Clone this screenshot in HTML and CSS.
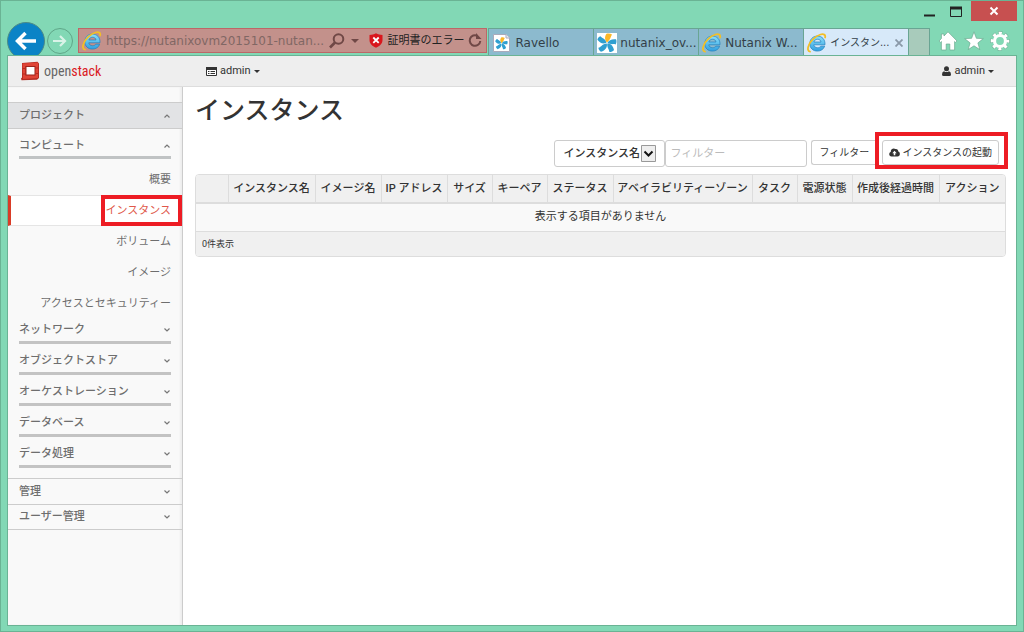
FILE: index.html
```html
<!DOCTYPE html>
<html lang="ja">
<head>
<meta charset="utf-8">
<title>インスタンス - OpenStack Dashboard</title>
<link rel="stylesheet" href="styles.css">
</head>
<body>
<svg class="defs" aria-hidden="true">
  <defs>
    <linearGradient id="ie-blue" x1="0" y1="0" x2="0" y2="1"><stop offset="0" stop-color="#8ce0fa"/><stop offset="1" stop-color="#2f9fe0"/></linearGradient>
    <symbol id="ie" viewBox="0 0 20 20">
      <path d="M18 11.800H6.800c.2 1.800 1.700 2.900 3.700 2.900 1.500 0 2.600-.5 3.300-1.500h3.900c-1.100 3.100-3.800 4.900-7.300 4.900-4.600 0-7.600-3.100-7.600-7.400s3-7.600 7.600-7.600c4.700 0 7.900 3.400 7.600 8.700zM6.900 9h7.100c-.3-1.800-1.600-2.700-3.500-2.700S7.300 7.300 6.900 9z" fill="url(#ie-blue)" stroke="#2380bd" stroke-width=".7"/>
      <path d="M3 18.600C.9 18.500.4 15.800 1.600 12.700 3.300 8 8.500 2.900 13.500 1.500c3.200-.9 5.300.2 4.600 3" fill="none" stroke="#f3bf26" stroke-width="1.800" stroke-linecap="round"/>
    </symbol>
    <symbol id="pinwheel" viewBox="0 0 20 20">
      <path d="M10 9.500C7.500 7 7.500 3.500 9.500.8c2-.6 4-.3 5.500.8C13.500 4 13.800 6.500 10 9.500z" fill="#fbb829"/>
      <path d="M10.500 9.800C12 7 14.500 5.800 19 6.200c.8 1.800.6 3.600-.4 5.200-2.600-.8-5 .6-8.100-1.600z" fill="#2f9fd0"/>
      <path d="M10.300 10.500c3.600-.2 5.700 2.500 6.700 6.500-1.300 1.500-2.800 2.100-4.600 2-.2-3-2.700-4.500-2.100-8.500z" fill="#2f9fd0"/>
      <path d="M9.800 10.500c.8 4-1.300 6.700-5.800 8.300-1.500-1-2.500-2.300-2.600-4C4.500 14 5 11 9.800 10.500z" fill="#2f9fd0"/>
      <path d="M9.500 9.800C6 11.500 3 10.200.4 6.800.8 5 1.800 3.800 3.400 3.200 5.500 5.500 8.500 5.500 9.500 9.800z" fill="#2f9fd0"/>
    </symbol>
    <symbol id="up" viewBox="0 0 8 6"><path d="M1.500 4.500 4 2l2.500 2.500" fill="none" stroke="#777" stroke-width="1.200"/></symbol>
    <symbol id="down" viewBox="0 0 8 6"><path d="M1.500 1.500 4 4l2.500-2.500" fill="none" stroke="#777" stroke-width="1.200"/></symbol>
    <symbol id="caret" viewBox="0 0 8 4"><path d="M0 0h8L4 4z" fill="currentColor"/></symbol>
  </defs>
</svg>

<div class="window">
  <div class="titlebar">
    <button class="win-btn" aria-label="最小化"><svg width="12" height="12"><path d="M0 9.500h11" stroke="#222" stroke-width="2"/></svg></button>
    <button class="win-btn" aria-label="最大化"><svg width="13" height="12"><path d="M.5 2v8.500h11V2" fill="none" stroke="#222"/><path d="M0 2h12" stroke="#222" stroke-width="3"/></svg></button>
    <button class="win-btn close" aria-label="閉じる"><svg width="10" height="10"><path d="m1.500 1.500 7 7m0-7-7 7" stroke="#fff" stroke-width="2"/></svg></button>
  </div>

  <div class="navbar">
    <button class="back" aria-label="戻る"><svg width="22" height="20" viewBox="0 0 22 20"><path d="M2.500 10H21M10.500 2l-8 8 8 8" fill="none" stroke="#fff" stroke-width="3.500"/></svg></button>
    <button class="forward" aria-label="進む"><svg width="14" height="12" viewBox="0 0 14 12"><path d="M0 6h12M7 1l5 5-5 5" fill="none" stroke="#d9f3e8" stroke-width="2.200"/></svg></button>
    <div class="address">
      <svg width="20" height="20"><use href="#ie"/></svg>
      <input class="url" type="text" aria-label="アドレス" value="https://nutanixovm2015101-nutan...">
      <button class="plain" aria-label="検索"><svg width="16" height="16"><circle cx="9.500" cy="6" r="4.800" fill="none" stroke="#704846" stroke-width="2"/><path d="m6 9.500-5 5" stroke="#704846" stroke-width="2.600"/></svg></button>
      <button class="plain drop" aria-label="履歴"><svg width="8" height="4"><use href="#caret"/></svg></button>
      <button class="cert"><svg width="14" height="15" viewBox="0 0 14 15"><path d="M7 .3C9 1.600 11 2 13.500 2v5c0 3.500-2.500 6-6.500 7.700C3 13 .5 10.500.5 7V2C3 2 5 1.600 7 .3z" fill="#d9161d"/><path d="m4.300 4.500 5.400 5.400m0-5.400L4.300 9.900" stroke="#fff" stroke-width="1.800"/></svg>証明書のエラー</button>
      <button class="plain" aria-label="更新"><svg width="14" height="15"><path d="M9.500 2.800A5.300 5.300 0 1 0 12.300 8" fill="none" stroke="#704846" stroke-width="2"/><path d="M8 0v6h5.500z" fill="#704846"/></svg></button>
    </div>
    <div class="tabs">
      <button class="tab"><svg width="20" height="20" viewBox="0 0 20 20"><path d="M1.500 1.500H14l3.500 3.500v13.500h-16z" fill="#fff" stroke="#aab"/><path d="M14 1.500V5h3.500" fill="#eee" stroke="#aab"/><use href="#pinwheel" x="3" y="4" width="13" height="13"/></svg><span>Ravello</span></button>
      <button class="tab"><svg width="20" height="20"><path d="M0 0h20v20H0z" fill="#fff"/><use href="#pinwheel" width="20" height="20"/></svg><span>nutanix_ov...</span></button>
      <button class="tab"><svg width="20" height="20"><use href="#ie"/></svg><span>Nutanix W...</span></button>
      <button class="tab current"><svg width="20" height="20"><use href="#ie"/></svg><span>インスタン...</span><svg class="tab-x" width="8" height="8"><path d="m.5.5 7 7m0-7-7 7" stroke="#8a99a8" stroke-width="1.800"/></svg></button>
      <button class="new-tab" aria-label="新しいタブ"></button>
    </div>
    <div class="tools">
      <button class="plain" aria-label="ホーム"><svg width="20" height="20" viewBox="0 0 20 20"><path d="M10 .8 19 10l-1.500 1.400-.9-.9V19h-4.800v-6H8.200v6H3.400v-8.500l-.9.900L1 10l2.400-2.500V3H6v2z" fill="#fff" stroke="#6ba98f" stroke-width=".7"/></svg></button>
      <button class="plain" aria-label="お気に入り"><svg width="20" height="20" viewBox="0 0 20 20"><path d="m10 .8 2.400 6.500 6.900.3-5.400 4.300 1.900 6.700-5.800-3.800-5.800 3.800 1.900-6.700L.7 7.600l6.900-.3z" fill="#fff" stroke="#6ba98f" stroke-width=".7"/></svg></button>
      <button class="plain" aria-label="ツール"><svg width="20" height="20" viewBox="0 0 20 20"><circle cx="10" cy="10" r="7.800" fill="none" stroke="#6ba98f" stroke-width="4" stroke-dasharray="3.700 2.426" stroke-dashoffset="1.800"/><circle cx="10" cy="10" r="7.800" fill="none" stroke="#fff" stroke-width="3" stroke-dasharray="3.100 3.026" stroke-dashoffset="1.500"/><circle cx="10" cy="10" r="5.500" fill="none" stroke="#fff" stroke-width="3.200"/></svg></button>
    </div>
  </div>

  <div class="page">
    <header class="topbar">
      <a class="brand" href="#">
        <svg width="20" height="20" viewBox="0 0 20 20"><path d="M2 2 17.500.8 19 2.500V17l-2 1.800L1.500 19.300 1 17.500l1-1z" fill="#b52c22"/><path d="M2.500 2.500 18 1.500V17L3 18z" fill="#e04436"/><path d="M5.300 5h10.200v9.500H5.300z" fill="#9c231b"/><path d="M6.500 6h8v7.500h-8z" fill="#fff"/><path d="M2.500 7.500h2.800M2.500 13h2.800M15.500 7H18M15.500 12.500H18" stroke="#b52c22"/></svg>
        <span class="logo-text">open<b>stack</b></span>
      </a>
      <button class="menu project"><svg width="11" height="9"><path d="M.5.500h10v8H.5z" fill="#fff" stroke="#333"/><path d="M2 4.500h1.500M4.500 4.500H9M2 6.500h1.500M4.500 6.500H9" stroke="#333"/><path d="M0 0h11v3H0z" fill="#333"/></svg>admin<svg width="6" height="3"><use href="#caret"/></svg></button>
      <button class="menu"><svg width="9" height="10" viewBox="0 0 9 10"><circle cx="4.500" cy="2.700" r="2.500" fill="#333"/><path d="M2 5.200Q4.500 7 7 5.200 9 5.600 9 8.500 9 10 7.500 10h-6Q0 10 0 8.500 0 5.600 2 5.200z" fill="#333"/></svg>admin<svg width="6" height="3"><use href="#caret"/></svg></button>
    </header>

    <div class="body">
      <nav class="sidebar">
        <button class="dash open">プロジェクト<svg width="8" height="6"><use href="#up"/></svg></button>
        <div class="groups">
          <button class="group"><span>コンピュート</span><svg width="8" height="6"><use href="#up"/></svg></button>
        </div>
        <ul class="panels">
          <li><a href="#">概要</a></li>
          <li class="active"><a href="#">インスタンス</a><i class="mark mark-nav"></i></li>
          <li><a href="#">ボリューム</a></li>
          <li><a href="#">イメージ</a></li>
          <li><a href="#">アクセスとセキュリティー</a></li>
        </ul>
        <div class="groups rest">
          <button class="group"><span>ネットワーク</span><svg width="8" height="6"><use href="#down"/></svg></button>
          <button class="group"><span>オブジェクトストア</span><svg width="8" height="6"><use href="#down"/></svg></button>
          <button class="group"><span>オーケストレーション</span><svg width="8" height="6"><use href="#down"/></svg></button>
          <button class="group"><span>データベース</span><svg width="8" height="6"><use href="#down"/></svg></button>
          <button class="group"><span>データ処理</span><svg width="8" height="6"><use href="#down"/></svg></button>
        </div>
        <button class="dash">管理<svg width="8" height="6"><use href="#down"/></svg></button>
        <button class="dash last">ユーザー管理<svg width="8" height="6"><use href="#down"/></svg></button>
      </nav>

      <main class="content">
        <h1>インスタンス</h1>
        <form class="actions">
          <div class="picker">
            <select class="field" aria-label="検索対象"><option>インスタンス名</option></select>
            <svg class="picker-arrow" width="15" height="17"><path d="M.5.500h14v16H.5z" fill="#eee" stroke="#999"/><path d="m3.500 6.500 4 4 4-4" fill="none" stroke="#111" stroke-width="2"/></svg>
          </div>
          <input class="filter" type="text" placeholder="フィルター" aria-label="フィルター">
          <button class="btn btn-filter" type="button">フィルター</button>
          <div class="launch">
            <button class="btn" type="button"><svg width="11" height="9" viewBox="0 0 11 9"><path d="M2.500 8.500C-.5 8.300-.3 4.500 1.800 4 1.500 1 4.500-.5 6.500 1c2-.2 2.700 1 2.700 2.500C11.500 4 11.500 8.300 8.500 8.500z" fill="#333"/><path d="M5.500 2.800 3.300 5.300h1.400v2h1.600v-2h1.400z" fill="#fff"/></svg>インスタンスの起動</button>
            <i class="mark mark-launch"></i>
          </div>
        </form>

        <div class="table-box">
          <table>
            <colgroup><col class="w-check"><col class="w-long"><col class="w-mid"><col class="w-mid"><col class="w-tiny"><col class="w-small"><col class="w-mid"><col class="w-zone"><col class="w-tiny"><col class="w-small"><col class="w-long"><col class="w-mid"></colgroup>
            <thead>
              <tr><th></th><th>インスタンス名</th><th>イメージ名</th><th>IP アドレス</th><th>サイズ</th><th>キーペア</th><th>ステータス</th><th>アベイラビリティーゾーン</th><th>タスク</th><th>電源状態</th><th>作成後経過時間</th><th>アクション</th></tr>
            </thead>
            <tbody><tr><td colspan="12">表示する項目がありません</td></tr></tbody>
            <tfoot><tr><td colspan="12">0件表示</td></tr></tfoot>
          </table>
        </div>
      </main>
    </div>
  </div>
</div>
</body>
</html>
```
FILE: styles.css
```css
* { box-sizing: border-box; }
body {
  margin: 0;
  color: #333;
  font: 11px/16px Roboto, "Noto Sans CJK JP", sans-serif;
}
button, input, select { margin: 0; font: inherit; color: inherit; }
button { padding: 0; border: 0; background: none; white-space: nowrap; }
svg { display: block; flex: none; }
a { color: inherit; text-decoration: none; }
.defs { position: absolute; width: 0; height: 0; }

/* Browser window */
.window {
  display: flex;
  flex-direction: column;
  min-height: 100vh;
  padding: 0 6px 5px 6px;
  background: #82d8b5;
  border: 1px solid #6ab394;
}
.titlebar { display: flex; justify-content: flex-end; gap: 14px; height: 21px; }
.win-btn { display: flex; align-items: center; }
.close { justify-content: center; width: 46px; margin-left: -6px; height: 20px; background: #c75050; }

.navbar {
  display: flex;
  align-items: flex-start;
  height: 33px;
  overflow: hidden;
  font-family: "DejaVu Sans", "Noto Sans CJK JP", sans-serif;
  font-size: 12px;
}
.back, .forward { display: flex; align-items: center; justify-content: center; flex: none; border-radius: 50%; }
.back { width: 38px; height: 38px; background: #0b83c6; border: 1px solid #4d8b86; }
.forward { width: 26px; height: 26px; margin: 6px 5px 0 2px; border: 1px solid #5fa688; }
.address {
  display: flex;
  flex: 400 1 0;
  align-items: center;
  gap: 4px;
  height: 25px;
  margin: 6px 1px 0 0;
  padding: 0 4px 0 3px;
  background: #c3918b;
  border: 1px solid #bd6767;
}
.url { flex: 1; min-width: 0; padding: 0; border: 0; background: none; color: #816764; }
.plain { display: flex; color: #704846; }
.drop { margin: 0 6px 0 2px; }
.cert { display: flex; align-items: center; gap: 4px; font-size: 11px; color: #222; }
.tabs { display: flex; flex: 441 1 0; height: 28px; margin-top: 6px; }
.tab {
  display: flex;
  flex: 1 1 0;
  align-items: center;
  gap: 3px;
  min-width: 0;
  padding: 0 3px;
  background: #8cbace;
  border: solid #69a593;
  border-width: 1px 0 0 1px;
  color: #333f48;
}
.current { background: #d7e9f9; font-size: 10px; }
.tab-x { margin: 0 2px 0 auto; }
.new-tab { width: 22px; background: #a8cbbb; border: 1px solid #69a593; border-bottom: 0; }
.tools { display: flex; gap: 6px; padding: 9px 7px 0 8px; }

/* Dashboard */
.page { display: flex; flex: 1; flex-direction: column; background: #fff; border: 1px solid #6ab394; }
.topbar { display: flex; align-items: center; height: 31px; padding: 0 22px 0 12px; background: #eee; border-bottom: 1px solid #ddd; }
.brand { display: flex; align-items: center; gap: 4px; width: 186px; }
.logo-text { font: 14px/20px "Roboto Condensed", Lato, sans-serif; color: #666; }
.logo-text b { font-weight: 400; color: #da1a24; }
.menu { display: flex; align-items: center; gap: 3px; }
.project { margin-right: auto; }

.body { display: flex; flex: 1; }
.sidebar {
  display: flex;
  flex-direction: column;
  flex: none;
  width: 175px;
  padding-top: 15px;
  background: #f9f9f9;
  border-right: 1px solid #ccc;
  box-shadow: inset -2px 0 2px #eee;
  color: #6e6e6e;
}
.dash, .group { display: flex; align-items: center; justify-content: space-between; width: 100%; font-weight: 500; text-align: left; }
.dash { height: 26px; padding: 0 11px; border-top: 1px solid #ccc; }
.open { height: 27px; background: #e2e3e5; border-bottom: 1px solid #ccc; }
.last { border-bottom: 1px solid #ccc; }
.groups { padding: 0 11px; }
.group { height: 30px; padding-top: 6px; border-bottom: 3px solid #c0c3c4; }
.rest { padding-bottom: 10px; }
.rest .group { height: 31px; border-color: #c3c3c3; }
.panels { margin: 0; padding: 5px 0 0; list-style: none; }
.panels li { position: relative; height: 31px; padding: 0 11px; line-height: 31px; text-align: right; }
.panels li:last-child { height: 25px; }
.panels .active { padding-left: 8px; background: #fff; border: solid #e5e5e5; border-width: 1px 0; border-left: 3px solid #d93c27; color: #e0584a; line-height: 29px; }
.mark { position: absolute; border: 4px solid #ed1c24; pointer-events: none; }
.mark-nav { top: -1px; right: 0; width: 81px; height: 31px; }

.content { flex: 1; min-width: 0; padding: 7px 10px 0 12px; }
h1 { margin: 0; font-size: 25px; font-weight: 500; line-height: 34px; }
.actions { display: flex; align-items: flex-start; justify-content: flex-end; margin: 12px 0 7px; }
.picker { position: relative; width: 111px; }
.field { width: 100%; height: 27px; padding: 0 8px; appearance: none; background: #fff; border: 1px solid #ccc; border-radius: 3px; font-weight: 500; }
.picker-arrow { position: absolute; top: 5px; right: 9px; pointer-events: none; }
.filter { width: 142px; height: 27px; margin-right: 4px; padding: 0 4px; border: 1px solid #ccc; border-radius: 3px; }
.filter::placeholder { color: #bbb; }
.btn { display: flex; align-items: center; justify-content: center; gap: 2px; height: 25px; padding: 0 6px; background: #fff; border: 1px solid #ccc; border-radius: 3px; font-size: 10px; }
.btn-filter { width: 65px; border-right: 0; border-radius: 3px 0 0 3px; }
.launch { position: relative; margin: 0 7px 0 6px; }
.mark-launch { top: -8px; right: -9px; bottom: -4px; left: -7px; }

.table-box { overflow: hidden; border: 1px solid #ddd; border-radius: 4px; }
table { width: 100%; table-layout: fixed; border-collapse: collapse; }
th, td { padding: 0; text-align: center; }
th { height: 28px; background: #f0f0f0; border-bottom: 2px solid #ddd; font-weight: 500; white-space: nowrap; }
th + th { border-left: 1px solid #ddd; }
tbody td { height: 28px; background: #f9f9f9; }
tfoot td { height: 25px; padding: 0 6px; background: #f0f0f0; border-top: 1px solid #ddd; font-size: 9px; text-align: left; }
.w-check { width: 32px; }
.w-long { width: 87px; }
.w-mid { width: 66px; }
.w-tiny { width: 45px; }
.w-small { width: 55px; }
.w-zone { width: 139px; }
```
